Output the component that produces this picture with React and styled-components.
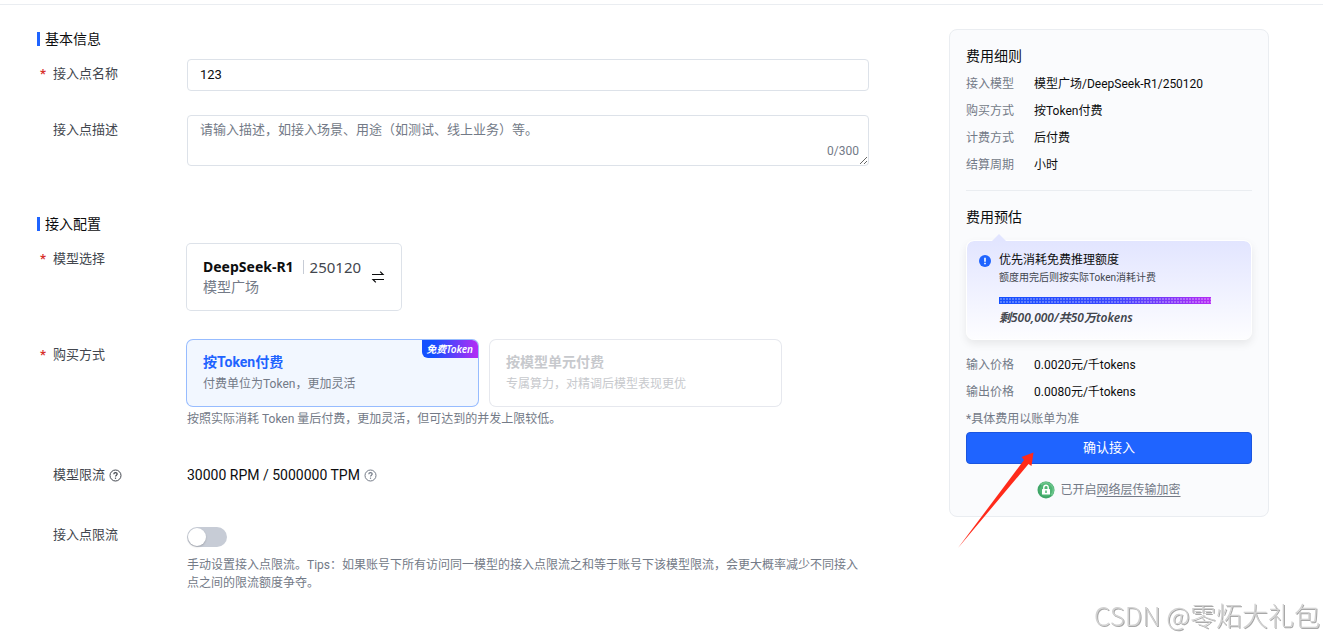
import { useState } from 'react';
import styled, { createGlobalStyle } from 'styled-components';

const modelInfo = [
  { label: '接入模型', value: '模型广场/DeepSeek-R1/250120' },
  { label: '购买方式', value: '按Token付费' },
  { label: '计费方式', value: '后付费' },
  { label: '结算周期', value: '小时' },
];

const prices = [
  { label: '输入价格', value: '0.0020元/千tokens' },
  { label: '输出价格', value: '0.0080元/千tokens' },
];

const HelpIcon = () => (
  <svg width="13" height="13" viewBox="0 0 13 13" fill="none" stroke="currentColor" aria-hidden="true">
    <circle cx="6.5" cy="6.5" r="5.5" />
    <path d="M4.8 5.3C4.8 4.2 5.5 3.6 6.5 3.6S8.2 4.2 8.2 5.1C8.2 6.2 6.5 6.2 6.5 7.6" strokeWidth="1.2" />
    <path d="M6.5 8.6V9.8" strokeWidth="1.2" />
  </svg>
);

const SwapIcon = () => (
  <svg width="14" height="14" viewBox="0 0 14 14" fill="none" stroke="currentColor" strokeWidth="1.2" aria-hidden="true">
    <path d="M1 4.5H12L9.2 1.6" />
    <path d="M13 9.5H2L4.8 12.4" />
  </svg>
);

const LockIcon = () => (
  <svg width="18" height="18" viewBox="0 0 18 18" aria-hidden="true">
    <circle cx="9" cy="9" r="8.5" fill="#3fa668" />
    <path d="M3 3A8.5 8.5 0 0 1 15 15Z" fill="#6cc58b" />
    <circle cx="9" cy="9" r="6.5" fill="#4fb574" />
    <path d="M6.8 8.5V6.4a2.2 2.2 0 0 1 4.4 0V8.5" fill="none" stroke="#fff" strokeWidth="1.4" />
    <rect x="5" y="8" width="8" height="5.5" rx="0.6" fill="#fff" />
    <path d="M9 9.6V12" stroke="#3fae68" strokeWidth="1.4" />
  </svg>
);

const InfoIcon = () => (
  <svg width="12" height="12" viewBox="0 0 12 12" aria-hidden="true">
    <circle cx="6" cy="6" r="6" fill="#1f64ff" />
    <path d="M6 2.8V6.8M6 7.8V9.2" stroke="#fff" strokeWidth="1.6" />
  </svg>
);

const QuotaBar = () => (
  <StQuotaBar viewBox="0 0 212 7" preserveAspectRatio="none" role="img" aria-label="剩余额度">
    <defs>
      <linearGradient id="quota-fill">
        <stop offset="0" stopColor="#1450ff" />
        <stop offset="0.55" stopColor="#3c46ff" />
        <stop offset="1" stopColor="#b52cf5" />
      </linearGradient>
      <pattern id="quota-dots" width="3" height="3" patternUnits="userSpaceOnUse">
        <rect x="1" y="1" width="2" height="2" fill="#fff" fillOpacity="0.28" />
      </pattern>
    </defs>
    <rect width="212" height="7" fill="url(#quota-fill)" />
    <rect width="212" height="7" fill="url(#quota-dots)" />
  </StQuotaBar>
);

const Field = ({ label, htmlFor, required, help, children }) => (
  <StField>
    <StLabel as={htmlFor ? 'label' : 'div'} htmlFor={htmlFor}>
      <StStar>{required && '*'}</StStar>
      {label}
      {help && <HelpIcon />}
    </StLabel>
    <StControl>{children}</StControl>
  </StField>
);

const Details = ({ items }) => (
  <StDetails>
    {items.map(({ label, value }) => (
      <StDetail key={label}>
        <dt>{label}</dt>
        <dd>{value}</dd>
      </StDetail>
    ))}
  </StDetails>
);

const App = () => {
  const [name, setName] = useState('123');
  const [desc, setDesc] = useState('');
  const [limited, setLimited] = useState(false);

  return (
    <>
      <GlobalStyle />
      <StTopLine />
      <StPage>
        <StForm>
          <section>
            <StSectionTitle>基本信息</StSectionTitle>
            <StFields $gap={24}>
              <Field label="接入点名称" htmlFor="name" required>
                <StInput id="name" value={name} onChange={e => setName(e.target.value)} />
              </Field>
              <Field label="接入点描述" htmlFor="desc">
                <StTextareaBox>
                  <StTextarea
                    id="desc"
                    maxLength={300}
                    placeholder="请输入描述，如接入场景、用途（如测试、线上业务）等。"
                    value={desc}
                    onChange={e => setDesc(e.target.value)}
                  />
                  <StCount>{desc.length}/300</StCount>
                </StTextareaBox>
              </Field>
            </StFields>
          </section>

          <section>
            <StSectionTitle>接入配置</StSectionTitle>
            <StFields $gap={30}>
              <Field label="模型选择" required>
                <StModelCard type="button">
                  <span>
                    <StModelName>
                      <strong>DeepSeek-R1</strong>
                      <StBar />
                      <StModelVersion>250120</StModelVersion>
                    </StModelName>
                    <StModelFrom>模型广场</StModelFrom>
                  </span>
                  <SwapIcon />
                </StModelCard>
              </Field>

              <Field label="购买方式" required>
                <StPlans>
                  <StPlan type="button" $active>
                    <StPlanTitle>按Token付费</StPlanTitle>
                    <StPlanText>付费单位为Token，更加灵活</StPlanText>
                    <StBadge>免费Token</StBadge>
                  </StPlan>
                  <StPlan type="button" disabled>
                    <StPlanTitle>按模型单元付费</StPlanTitle>
                    <StPlanText>专属算力，对精调后模型表现更优</StPlanText>
                  </StPlan>
                </StPlans>
                <StPlanHint>按照实际消耗 Token 量后付费，更加灵活，但可达到的并发上限较低。</StPlanHint>
              </Field>

              <Field label="模型限流" help>
                <StLimit>
                  30000 RPM / 5000000 TPM
                  <HelpIcon />
                </StLimit>
              </Field>

              <Field label="接入点限流" htmlFor="limit">
                <StSwitch
                  id="limit"
                  type="checkbox"
                  role="switch"
                  checked={limited}
                  onChange={e => setLimited(e.target.checked)}
                />
                <StHint>
                  手动设置接入点限流。Tips：如果账号下所有访问同一模型的接入点限流之和等于账号下该模型限流，会更大概率减少不同接入点之间的限流额度争夺。
                </StHint>
              </Field>
            </StFields>
          </section>
        </StForm>

        <StAside>
          <StAsideTitle>费用细则</StAsideTitle>
          <Details items={modelInfo} />
          <StDivider />
          <StAsideTitle>费用预估</StAsideTitle>
          <StQuota>
            <InfoIcon />
            <StQuotaBody>
              <StQuotaTitle>优先消耗免费推理额度</StQuotaTitle>
              <StQuotaText>额度用完后则按实际Token消耗计费</StQuotaText>
              <QuotaBar />
              <StQuotaLeft>剩500,000/共50万tokens</StQuotaLeft>
            </StQuotaBody>
          </StQuota>
          <Details items={prices} />
          <StNote>*具体费用以账单为准</StNote>
          <StSubmit type="button">确认接入</StSubmit>
          <StSecure>
            <LockIcon />
            <span>
              已开启<a href="#encryption">网络层传输加密</a>
            </span>
          </StSecure>
          <StArrow viewBox="0 0 78 96" aria-hidden="true">
            <path d="M0 96L66 8L63.5 5L75.5 0.5L73.5 14L70.5 12Z" fill="#ff2a1a" />
          </StArrow>
        </StAside>
      </StPage>
      <StWatermark>CSDN @零炻大礼包</StWatermark>
    </>
  );
};

export default App;

const GlobalStyle = createGlobalStyle`
  * {
    box-sizing: border-box;
  }

  body {
    margin: 0;
    background: #fff;
    color: #0c0d0e;
    font-family: Roboto, 'Noto Sans CJK SC', sans-serif;
    font-size: 13px;
  }

  button, input, textarea {
    font: inherit;
    color: inherit;
  }

  svg {
    flex-shrink: 0;
  }
`;

const StTopLine = styled.div`
  height: 5px;
  border-bottom: 1px solid #eaedf1;
`;

const StPage = styled.div`
  display: flex;
  align-items: flex-start;
  gap: 80px;
  padding: 24px 54px 32px 37px;
`;

const StForm = styled.main`
  flex: 1;
  min-width: 0;
  display: flex;
  flex-direction: column;
  gap: 48px;
`;

const StSectionTitle = styled.h2`
  display: flex;
  align-items: center;
  gap: 5px;
  margin: 0 0 10px;
  font-size: 14px;
  font-weight: 400;
  line-height: 20px;

  &::before {
    content: '';
    width: 3px;
    height: 14px;
    background: #1f64ff;
  }
`;

const StFields = styled.div`
  display: flex;
  flex-direction: column;
  gap: ${({ $gap }) => $gap}px;
`;

const StField = styled.div`
  display: flex;
  align-items: flex-start;
`;

const StLabel = styled.div`
  display: flex;
  align-items: center;
  width: 150px;
  flex-shrink: 0;
  color: #42464e;
  line-height: 30px;

  svg {
    margin-left: 4px;
  }
`;

const StStar = styled.span`
  width: 16px;
  padding-left: 3px;
  color: #d7312a;
  font-weight: 700;
`;

const StControl = styled.div`
  flex: 1;
  min-width: 0;
`;

const StInput = styled.input`
  display: block;
  width: 100%;
  height: 32px;
  padding: 0 12px 1px;
  border: 1px solid #dde2e9;
  border-radius: 4px;
  background: #fff;
`;

const StTextareaBox = styled.div`
  position: relative;
`;

const StTextarea = styled.textarea`
  display: block;
  width: 100%;
  height: 51px;
  padding: 4px 12px;
  border: 1px solid #dde2e9;
  border-radius: 4px;
  line-height: 20px;
  resize: vertical;

  &::placeholder {
    color: #737a87;
  }
`;

const StCount = styled.span`
  position: absolute;
  right: 10px;
  bottom: 6px;
  color: #737a87;
  font-size: 12px;
  line-height: 18px;
`;

const StModelCard = styled.button`
  display: flex;
  align-items: center;
  gap: 10px;
  height: 66px;
  padding: 0 16px;
  border: 0;
  border-radius: 4px;
  background: #fff;
  box-shadow: 0 0 0 1px #dde2e9;
  text-align: left;
`;

const StModelName = styled.span`
  display: flex;
  align-items: center;
  font-family: 'Noto Sans', 'Noto Sans CJK SC', sans-serif;
  font-size: 14px;
  line-height: 20px;
`;

const StBar = styled.span`
  width: 1px;
  height: 14px;
  margin: 0 6px 0 9px;
  background: #c7ccd6;
`;

const StModelVersion = styled.span`
  color: #42464e;
  font-size: 15px;
`;

const StModelFrom = styled.span`
  display: block;
  color: #737a87;
  font-size: 14px;
  line-height: 20px;
`;

const StPlans = styled.div`
  display: flex;
  gap: 12px;
`;

const StPlan = styled.button`
  position: relative;
  width: 291px;
  height: 66px;
  padding: 0 16px 1px;
  border: 0;
  border-radius: 6px;
  overflow: hidden;
  background: ${({ $active }) => ($active ? '#f2f7ff' : '#fff')};
  box-shadow: 0 0 0 1px ${({ $active }) => ($active ? '#97bcff' : '#e6e8ee')};
  color: ${({ $active }) => ($active ? '#737a87' : '#c7c9cd')};
  text-align: left;

  strong {
    color: ${({ $active }) => ($active ? '#1f64ff' : '#c7c9cd')};
  }
`;

const StPlanTitle = styled.strong`
  display: block;
  font-size: 14px;
  line-height: 22px;
`;

const StPlanText = styled.span`
  display: block;
  font-size: 12px;
  line-height: 22px;
`;

const StBadge = styled.span`
  position: absolute;
  top: 0;
  right: 0;
  padding: 0 5px 0 4px;
  border-bottom-left-radius: 6px;
  background: linear-gradient(90deg, #1450ff 20%, #b52cf5);
  color: #fff;
  font-family: 'Noto Sans', 'Noto Sans CJK SC', sans-serif;
  font-size: 10px;
  font-style: italic;
  font-weight: 600;
  line-height: 18px;
`;

const StHint = styled.p`
  margin: 9px 0 0;
  color: #737a87;
  font-size: 12px;
  line-height: 18px;
`;

const StPlanHint = styled(StHint)`
  margin: 4px 0 2px;
`;

const StLimit = styled.div`
  display: flex;
  align-items: center;
  gap: 4px;
  font-size: 14px;
  line-height: 30px;

  svg {
    color: #737a87;
  }
`;

const StSwitch = styled.input`
  appearance: none;
  display: flex;
  align-items: center;
  width: 40px;
  height: 20px;
  margin: 7px 0 0;
  padding: 0 1px;
  border-radius: 10px;
  background: ${({ checked }) => (checked ? '#1f64ff' : '#c7ccd6')};
  cursor: pointer;

  &::before {
    content: '';
    width: 18px;
    height: 18px;
    margin-left: ${({ checked }) => (checked ? '20px' : '0')};
    border-radius: 50%;
    background: #fff;
    box-shadow: 0 1px 2px rgba(0, 0, 0, 0.2);
  }
`;

const StAside = styled.aside`
  position: relative;
  display: flex;
  flex-direction: column;
  width: 320px;
  flex-shrink: 0;
  padding: 16px;
  border: 1px solid #eaedf1;
  border-radius: 8px;
  background: #fafbfd;
`;

const StAsideTitle = styled.h3`
  margin: 0 0 5px;
  font-size: 14px;
  font-weight: 400;
  line-height: 20px;
`;

const StDetails = styled.dl`
  margin: 0;
`;

const StDetail = styled.div`
  display: flex;
  font-size: 12px;
  line-height: 27px;

  dt {
    width: 68px;
    color: #737a87;
  }

  dd {
    margin: 0;
  }
`;

const StDivider = styled.hr`
  width: 100%;
  height: 1px;
  margin: 11px 0 16px;
  border: 0;
  background: #eaedf1;
`;

const StQuota = styled.div`
  position: relative;
  display: flex;
  gap: 8px;
  margin: 8px 0 12px;
  padding: 9px 12px 11px;
  border: 1px solid #fff;
  border-radius: 8px;
  background: linear-gradient(180deg, #e2e5ff, #fdfdff) padding-box;
  box-shadow: 0 4px 8px rgba(0, 0, 0, 0.08);

  > svg {
    margin-top: 5px;
  }

  &::before {
    content: '';
    position: absolute;
    top: -7px;
    left: 25px;
    border: 7px solid transparent;
    border-top: 0;
    border-bottom-color: #e2e5ff;
  }
`;

const StQuotaBody = styled.div`
  flex: 1;
  padding-right: 28px;
`;

const StQuotaTitle = styled.div`
  font-size: 12px;
  line-height: 20px;
`;

const StQuotaText = styled.div`
  color: #42464e;
  font-size: 10px;
  line-height: 16px;
`;

const StQuotaBar = styled.svg`
  display: block;
  width: 100%;
  height: 7px;
  margin: 11px 0 4px;
`;

const StQuotaLeft = styled.div`
  color: #42464e;
  font-family: 'Noto Sans', 'Noto Sans CJK SC', sans-serif;
  font-size: 12px;
  font-style: italic;
  font-weight: 600;
  line-height: 20px;
`;

const StNote = styled.p`
  margin: 4px 0;
  color: #737a87;
  font-size: 12px;
  line-height: 18px;
`;

const StSubmit = styled.button`
  height: 32px;
  padding: 0 0 3px;
  border: 1px solid #1a55e0;
  border-radius: 4px;
  background: #1f64ff;
  color: #fff;
  cursor: pointer;
`;

const StSecure = styled.div`
  display: flex;
  justify-content: center;
  align-items: center;
  gap: 5px;
  margin: 16px 0 0;
  color: #737a87;
  font-size: 12px;
  line-height: 20px;

  a {
    color: inherit;
    text-underline-offset: 2px;
  }
`;

const StArrow = styled.svg`
  position: absolute;
  left: 8px;
  bottom: -32px;
  width: 78px;
  height: 96px;
  pointer-events: none;
`;

const StWatermark = styled.div`
  position: fixed;
  right: 3px;
  bottom: 6px;
  color: #d2d2d2;
  font-family: 'Noto Sans CJK SC', sans-serif;
  font-size: 26px;
  font-weight: 300;
  line-height: 36px;
  text-shadow: 1px 1px 0 #a8a8a8;
  pointer-events: none;
`;
